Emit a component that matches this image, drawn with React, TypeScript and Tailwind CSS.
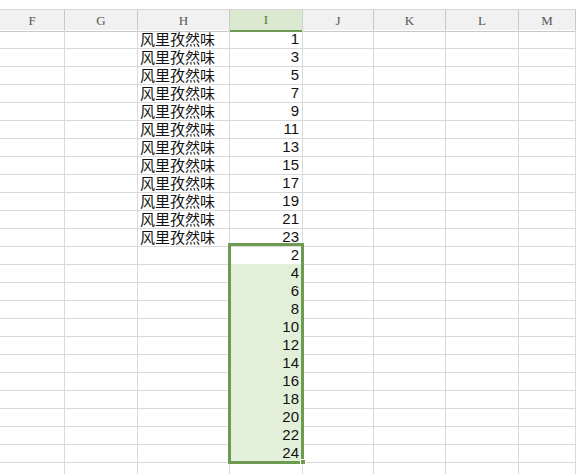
import React from 'react';

const cols = ['F', 'G', 'H', 'I', 'J', 'K', 'L', 'M'];
const widths = 'grid-cols-[65px_73px_92px_73px_71px_72px_73px_1fr]';

const rows = Array.from({ length: 26 }, (_, i) => {
  if (i < 12) return { text: '风里孜然味', num: String(i * 2 + 1) };
  if (i < 24) return { text: '', num: String((i - 11) * 2) };
  return { text: '', num: '' };
});

export default function App() {
  return (
    <div className="relative h-[474px] w-[576px] overflow-hidden bg-white">
      <div className="h-[9px] bg-white" />

      {/* column headers */}
      <div className={`grid ${widths} h-[21px] border-t border-[#d6d6d6] bg-[#f1f1f1]`}>
        {cols.map((c) => (
          <div
            key={c}
            className={
              c === 'I'
                ? 'flex items-center justify-center border-r border-b-2 border-r-[#d0d0d0] border-b-[#6f9a52] bg-[#dbe9d0] text-[13px] text-[#4f7a36] font-["Liberation_Serif",serif]'
                : 'flex items-center justify-center border-r border-b border-[#c8c8c8] text-[13px] text-[#555] font-["Liberation_Serif",serif]'
            }
          >
            {c}
          </div>
        ))}
      </div>

      {/* rows */}
      {rows.map((r, i) => {
        const selected = i >= 12 && i < 24;
        return (
          <div key={i} className={`grid ${widths} h-[18px]`}>
            {cols.map((c) => {
              let content: React.ReactNode = null;
              let cls = 'border-r border-b border-[#d9d9d9]';
              if (c === 'H' && r.text) {
                content = r.text;
                cls += ' pl-[2px] text-[15px] leading-[17px] text-[#111] font-["Noto_Sans_CJK_SC",sans-serif]';
              }
              if (c === 'I') {
                content = r.num;
                cls += ' pr-[3px] text-right text-[15px] leading-[18px] text-[#111] font-["Liberation_Sans",sans-serif]';
                if (selected && i !== 12) cls += ' bg-[#e3f0d9]';
              }
              return (
                <div key={c} className={cls}>
                  {content}
                </div>
              );
            })}
          </div>
        );
      })}

      {/* selection outline */}
      <div className="pointer-events-none absolute left-[228px] top-[243px] h-[221px] w-[76px] border-[3px] border-[#6f9a52]" />
      <div className="absolute left-[300px] top-[459px] h-[6px] w-[6px] border border-white bg-[#6f9a52]" />
    </div>
  );
}
